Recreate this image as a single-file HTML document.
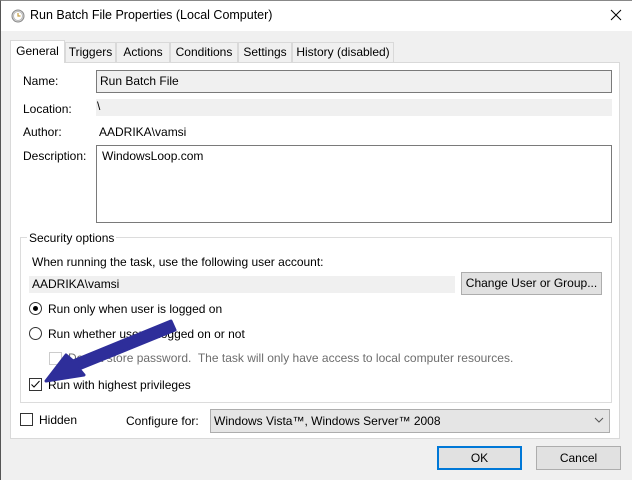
<!DOCTYPE html>
<html><head><style>
*{margin:0;padding:0;box-sizing:border-box}
body{width:632px;height:480px;background:#f0f0f0;font-family:"Liberation Sans",sans-serif;font-size:12px;color:#000;position:relative;overflow:hidden}
.a{position:absolute;white-space:nowrap}
.tab{position:absolute;top:42px;height:20px;border:1px solid #d9d9d9;border-bottom:none;background:#f0f0f0;text-align:center;line-height:18px;font-size:12px}
.box{position:absolute;border:1px solid #7a7a7a}
.btn{position:absolute;background:#e1e1e1;border:1px solid #adadad;text-align:center}
.rad{position:absolute;width:13px;height:13px;border:1px solid #333;border-radius:50%;background:#fff}
.chk{position:absolute;width:13px;height:13px;border:1px solid #333;background:#fff}
</style></head><body>
<div class="a" style="left:0;top:0;width:632px;height:31px;background:#fff;border-left:1px solid #555;border-top:1px solid #888"></div>
<div class="a" style="left:0;top:31px;width:1px;height:449px;background:#555"></div>
<svg class="a" style="left:11px;top:9px" width="14" height="14"><circle cx="7" cy="7" r="6" fill="#ddd" stroke="#888"/><circle cx="7" cy="7" r="4.5" fill="#fff" stroke="#bbb"/><path d="M7 4v3h2.5" stroke="#c8a040" fill="none" stroke-width="1.2"/></svg>
<div class="a" style="left:30px;top:8px;font-size:12.5px">Run Batch File Properties (Local Computer)</div>
<svg class="a" style="left:610px;top:9px" width="12" height="12"><path d="M1 1L11 11M11 1L1 11" stroke="#000" stroke-width="1"/></svg>
<div class="a" style="left:10px;top:62px;width:610px;height:377px;background:#fff;border:1px solid #d9d9d9"></div>
<div class="tab" style="left:65px;width:51px">Triggers</div>
<div class="tab" style="left:116px;width:54px">Actions</div>
<div class="tab" style="left:170px;width:68px">Conditions</div>
<div class="tab" style="left:238px;width:54px">Settings</div>
<div class="tab" style="left:292px;width:102px">History (disabled)</div>
<div class="tab" style="left:10px;top:40px;height:23px;width:55px;background:#fff;line-height:20px">General</div>
<div class="a" style="left:23px;top:74px">Name:</div>
<div class="box" style="left:96px;top:70px;width:516px;height:23px;background:#f0f0f0"></div>
<div class="a" style="left:100px;top:74px">Run Batch File</div>
<div class="a" style="left:23px;top:102px">Location:</div>
<div class="a" style="left:96px;top:99px;width:516px;height:17px;background:#f0f0f0"></div>
<div class="a" style="left:97px;top:99px">\</div>
<div class="a" style="left:23px;top:125px">Author:</div>
<div class="a" style="left:99px;top:125px">AADRIKA\vamsi</div>
<div class="a" style="left:23px;top:149px">Description:</div>
<div class="box" style="left:96px;top:145px;width:516px;height:78px;background:#fff"></div>
<div class="a" style="left:102px;top:149px">WindowsLoop.com</div>
<div class="a" style="left:20px;top:237px;width:592px;height:166px;border:1px solid #dcdcdc"></div>
<div class="a" style="left:27px;top:231px;background:#fff;padding:0 2px">Security options</div>
<div class="a" style="left:32px;top:255px">When running the task, use the following user account:</div>
<div class="a" style="left:29px;top:276px;width:426px;height:17px;background:#f0f0f0"></div>
<div class="a" style="left:32px;top:277px">AADRIKA\vamsi</div>
<div class="btn" style="left:461px;top:272px;width:141px;height:23px;line-height:21px">Change User or Group...</div>
<div class="rad" style="left:29px;top:302px"></div><div class="a" style="left:33px;top:306px;width:5px;height:5px;border-radius:50%;background:#000"></div>
<div class="a" style="left:48px;top:302px">Run only when user is logged on</div>
<div class="rad" style="left:29px;top:327px"></div>
<div class="a" style="left:48px;top:327px">Run whether user is logged on or not</div>
<div class="chk" style="left:49px;top:352px;border-color:#ccc"></div>
<div class="a" style="left:68px;top:351px;color:#6d6d6d">Do not store password.&nbsp; The task will only have access to local computer resources.</div>
<div class="chk" style="left:29px;top:378px"></div>
<svg class="a" style="left:29px;top:378px" width="13" height="13"><path d="M2.5 6.5L5 9L10.5 3" stroke="#000" fill="none"/></svg>
<div class="a" style="left:48px;top:378px">Run with highest privileges</div>
<div class="chk" style="left:20px;top:413px"></div>
<div class="a" style="left:39px;top:413px">Hidden</div>
<div class="a" style="left:126px;top:414px">Configure for:</div>
<div class="a" style="left:210px;top:409px;width:400px;height:24px;background:#e5e5e5;border:1px solid #adadad"></div>
<div class="a" style="left:214px;top:414px">Windows Vista™, Windows Server™ 2008</div>
<svg class="a" style="left:594px;top:417px" width="10" height="7"><path d="M1 1L5 5L9 1" stroke="#555" fill="none"/></svg>
<div class="btn" style="left:437px;top:446px;width:85px;height:24px;border:2px solid #0078d7;line-height:20px">OK</div>
<div class="btn" style="left:536px;top:446px;width:85px;height:24px;line-height:22px">Cancel</div>
<svg class="a" style="left:0;top:0" width="632" height="480"><path d="M171 321L175 330L79 369L84 375L46 381L66 355L73 361Z" fill="#2e2e9a" stroke="#2e2e9a" stroke-linejoin="round" stroke-width="3"/></svg>
</body></html>
